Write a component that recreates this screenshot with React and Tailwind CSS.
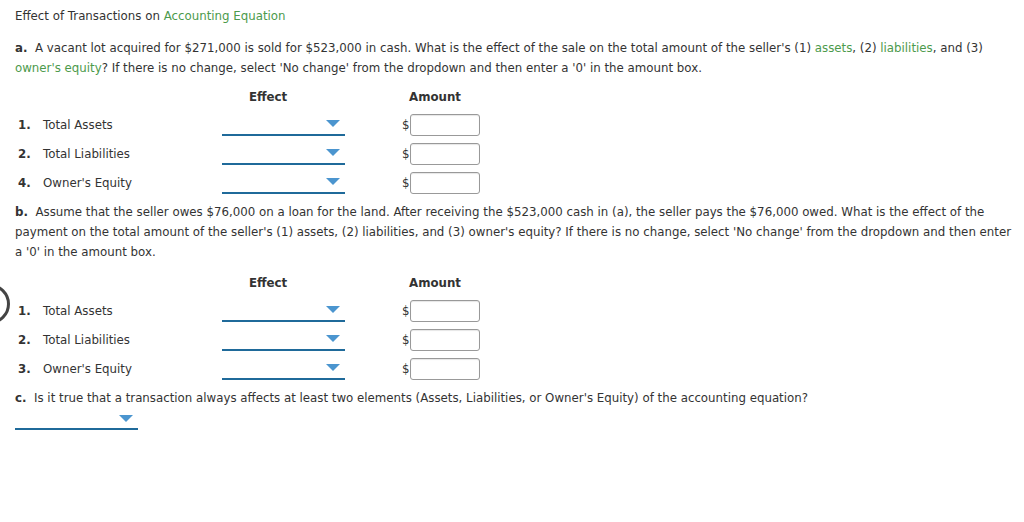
import React from 'react';

const Dropdown = ({ width = 'w-[123px]' }) => (
  <div className={`${width} h-[22px] border-b-2 border-[#1f6a9a] flex items-center justify-end pr-[5px]`}>
    <svg width="14" height="7" viewBox="0 0 14 7">
      <polygon points="0,0 14,0 7,7" fill="#4b95cf" />
    </svg>
  </div>
);

const Row = ({ num, label }) => (
  <div className="flex items-center h-[29px]">
    <div className="w-[207px] flex pl-[3px]">
      <span className="w-[25px] font-bold">{num}.</span>
      <span>{label}</span>
    </div>
    <Dropdown />
    <div className="ml-[57px] flex items-center">
      <span className="w-[8px]">$</span>
      <div className="w-[70px] h-[22px] border border-[#999] rounded-[3px] shadow-[inset_0_1px_1px_rgba(0,0,0,0.1)] bg-white" />
    </div>
  </div>
);

const Header = () => (
  <div className="flex font-bold h-[20px] items-center">
    <div className="w-[234px]" />
    <div className="w-[160px]">Effect</div>
    <div>Amount</div>
  </div>
);

const Link = ({ children }) => <span className="text-[#4c9a4c]">{children}</span>;

export default function App() {
  return (
    <div className="relative min-h-[522px] bg-white text-[#333] text-[11.8px] leading-[20px] font-['DejaVu_Sans',Verdana,sans-serif] pl-[15px] pr-[4px] pt-[6px] overflow-hidden">
      <div className="absolute left-[-31px] top-[284px] w-[41px] h-[40px] rounded-full border-[3px] border-[#444]" />
      <div>Effect of Transactions on <Link>Accounting Equation</Link></div>

      <p className="mt-[12px]">
        <b>a.</b>&nbsp; A vacant lot acquired for $271,000 is sold for $523,000 in cash. What is the effect of the sale on the total amount of the seller's (1) <Link>assets</Link>, (2) <Link>liabilities</Link>, and (3) <Link>owner's equity</Link>? If there is no change, select 'No change' from the dropdown and then enter a '0' in the amount box.
      </p>

      <div className="mt-[9px]">
        <Header />
        <div className="mt-[3px]">
          <Row num="1" label="Total Assets" />
          <Row num="2" label="Total Liabilities" />
          <Row num="4" label="Owner's Equity" />
        </div>
      </div>

      <p className="mt-[5px]">
        <b>b.</b>&nbsp; Assume that the seller owes $76,000 on a loan for the land. After receiving the $523,000 cash in (a), the seller pays the $76,000 owed. What is the effect of the payment on the total amount of the seller's (1) assets, (2) liabilities, and (3) owner's equity? If there is no change, select 'No change' from the dropdown and then enter a '0' in the amount box.
      </p>

      <div className="mt-[11px]">
        <Header />
        <div className="mt-[3px]">
          <Row num="1" label="Total Assets" />
          <Row num="2" label="Total Liabilities" />
          <Row num="3" label="Owner's Equity" />
        </div>
      </div>

      <p className="mt-[5px]">
        <b>c.</b>&nbsp; Is it true that a transaction always affects at least two elements (Assets, Liabilities, or Owner's Equity) of the accounting equation?
      </p>
      <div>
        <Dropdown />
      </div>
    </div>
  );
}
